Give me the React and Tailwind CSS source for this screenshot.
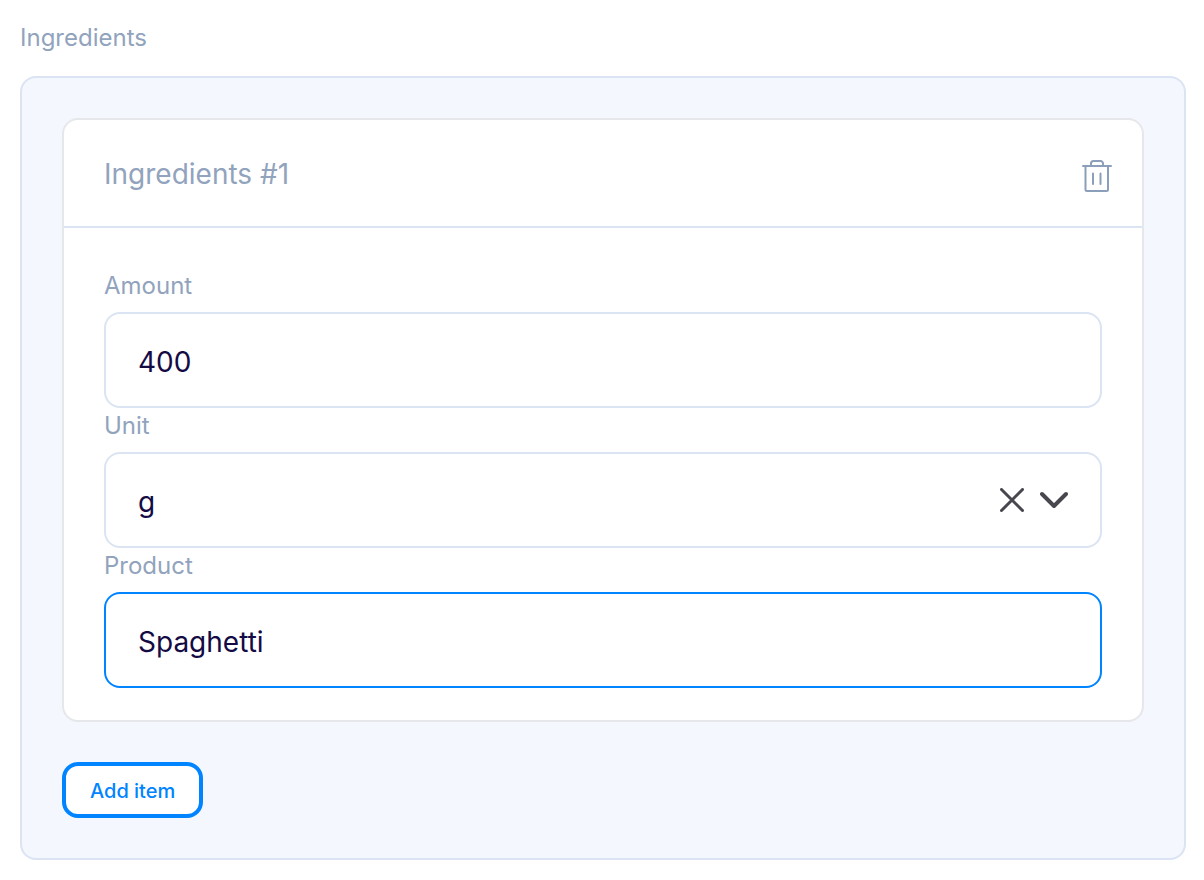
function TrashIcon() {
  return (
    <svg className="block" width="30" height="34" viewBox="0 0 30 34" fill="none" stroke="#8c9fba" strokeWidth="2" strokeLinecap="round" aria-hidden="true">
      <path d="M1 7h28M3.500 7v23.500a1.500 1.500 0 0 0 1.500 1.500h19.500a1.500 1.500 0 0 0 1.500-1.500V7M9 7V4.500A2.500 2.500 0 0 1 11.500 2h7a2.500 2.500 0 0 1 2.500 2.500V7M11 14.500v10.500M18.500 14.500v10.500" />
    </svg>
  );
}

function Field({ id, label, children }) {
  return (
    <div>
      <label htmlFor={id} className="flex h-11 items-center pb-2 text-2xl text-[#91a3bd]">
        {label}
      </label>
      {children}
    </div>
  );
}

const control =
  "block h-24 w-full appearance-none rounded-2xl border-2 bg-white px-8 pt-1 text-[28px] text-[#140b45] outline-none";

export default function App() {
  return (
    <main className="px-5 pt-5 pr-[18px] pb-5 font-['Inter',sans-serif]">
      <h2 className="h-14 text-2xl leading-9 text-[#91a3bd]">Ingredients</h2>
      <section className="rounded-2xl border-2 border-[#dae4f3] bg-[#f4f7fe] p-10">
        <article className="rounded-2xl border-2 border-[#e5e7eb] bg-white">
          <header className="flex h-[108px] items-center justify-between border-b-2 border-[#dae4f3] pt-[2px] pr-[30px] pl-10">
            <h3 className="text-[28px] text-[#91a3bd]">Ingredients #1</h3>
            <button type="button" aria-label="Delete item" className="pt-1">
              <TrashIcon />
            </button>
          </header>
          <div className="px-10 pt-10 pb-8">
            <Field id="amount" label="Amount">
              <input id="amount" defaultValue="400" className={`${control} border-[#dae4f3]`} />
            </Field>
            <Field id="unit" label="Unit">
              <div className="relative">
                <select id="unit" defaultValue="g" className={`${control} border-[#dae4f3]`}>
                  <option>g</option>
                </select>
                <div className="pointer-events-none absolute inset-y-0 right-[34px] flex items-center gap-4">
                  <button type="button" aria-label="Clear unit" className="pointer-events-auto">
                    <svg className="block" width="24" height="24" viewBox="0 0 24 24" fill="none" stroke="#48474f" strokeWidth="3" aria-hidden="true">
                      <path d="M1.500 1.500l21 21M22.500 1.500l-21 21" strokeLinecap="round" />
                    </svg>
                  </button>
                  <svg className="block" width="28" height="18" viewBox="0 0 28 18" fill="none" stroke="#48474f" strokeWidth="4" strokeLinecap="round" strokeLinejoin="round" aria-hidden="true">
                    <path d="M2 3l12 12L26 3" />
                  </svg>
                </div>
              </div>
            </Field>
            <Field id="product" label="Product">
              <input id="product" defaultValue="Spaghetti" className={`${control} border-[#0084ff]`} />
            </Field>
          </div>
        </article>
        <button type="button" className="mt-10 block h-14 rounded-2xl border-4 border-[#0084ff] bg-white px-6 pt-[2px] text-xl font-medium text-[#0084ff]">
          Add item
        </button>
      </section>
    </main>
  );
}
